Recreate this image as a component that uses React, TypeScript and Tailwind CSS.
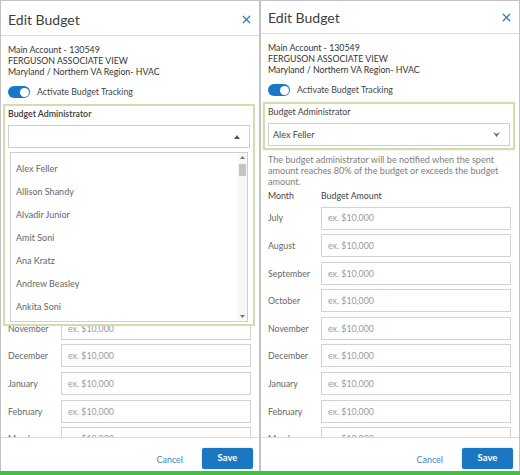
import { X } from "lucide-react";

const months = [
  "July",
  "August",
  "September",
  "October",
  "November",
  "December",
  "January",
  "February",
  "March",
];

const admins = [
  "Alex Feller",
  "Allison Shandy",
  "Alvadir Junior",
  "Amit Soni",
  "Ana Kratz",
  "Andrew Beasley",
  "Ankita Soni",
  "Anthony Ruiz",
];

function Caret({ up }: { up?: boolean }) {
  return up ? (
    <svg width="6" height="4" viewBox="0 0 6 4">
      <path d="M0 4 L3 0 L6 4 Z" fill="#555" />
    </svg>
  ) : (
    <svg width="7" height="5" viewBox="0 0 7 5">
      <path d="M0 0 L3.5 5 L7 0 L3.5 2 Z" fill="#3a6f9e" />
    </svg>
  );
}

function AdminList() {
  return (
    <div className="mt-[2px] flex h-[170px] overflow-hidden border border-[#cfcfcf] bg-white">
      <div className="flex-1 pt-[4px]">
        {admins.map((name) => (
          <div
            key={name}
            className="flex h-[23px] items-center pl-[5px] text-[9px] text-[#666]"
          >
            {name}
          </div>
        ))}
      </div>
      <div className="flex w-[9px] flex-col items-center bg-[#f7f7f7] py-[3px]">
        <svg width="5" height="3" viewBox="0 0 5 3">
          <path d="M0 3 L2.5 0 L5 3 Z" fill="#777" />
        </svg>
        <div className="mt-[5px] h-[12px] w-[7px] bg-[#c4c4c4]" />
        <div className="flex-1" />
        <svg width="5" height="3" viewBox="0 0 5 3">
          <path d="M0 0 L2.5 3 L5 0 Z" fill="#777" />
        </svg>
      </div>
    </div>
  );
}

function Panel({ open }: { open?: boolean }) {
  return (
    <div
      className={
        open
          ? "flex w-[258px] flex-col bg-white pt-[2px]"
          : "flex w-[258px] flex-col bg-white"
      }
    >
      <div className="flex h-[33px] shrink-0 items-center justify-between border-b border-[#dcdcdc] pl-[7px] pr-[6px]">
        <span className="text-[14px] text-[#3d3d3d]">Edit Budget</span>
        <X size={13} strokeWidth={2.4} className="text-[#2b7ec1]" />
      </div>

      <div className="min-h-0 flex-1 overflow-hidden pl-[7px] pr-[8px] pt-[8px]">
        <div className="text-[8.8px] leading-[11px] text-[#333]">
          <div>Main Account - 130549</div>
          <div>FERGUSON ASSOCIATE VIEW</div>
          <div>Maryland / Northern VA Region- HVAC</div>
        </div>

        <div className="mt-[9px] flex h-[12px] items-center gap-[7px]">
          <div className="flex h-[12px] w-[22px] items-center justify-end rounded-full bg-[#1a77c6] pr-[1.5px]">
            <div className="h-[9px] w-[9px] rounded-full bg-white" />
          </div>
          <span className="text-[8.8px] text-[#444]">
            Activate Budget Tracking
          </span>
        </div>

        <div
          className={
            open
              ? "relative z-10 -ml-[5px] -mr-[4px] mt-[6px] border-x-2 border-t-2 border-[#d2dcac] bg-white px-[3px] pb-[2px] pt-[1.5px]"
              : "relative -ml-[5px] -mr-[4px] mt-[6px] border-2 border-[#d2dcac] bg-white px-[3px] pb-[2px] pt-[1.5px] shadow-[0_0_2px_#e3ead0]"
          }
        >
          <div
            className={
              open
                ? "text-[8.8px] font-semibold leading-[11px] text-[#3a3a3a]"
                : "text-[8.8px] leading-[11px] text-[#444]"
            }
          >
            Budget Administrator
          </div>
          <div className="mt-[6.5px] flex h-[23px] items-center justify-between border border-[#cfcfcf] pl-[4px] pr-[9px] text-[9px] text-[#444]">
            <span>{open ? "" : "Alex Feller"}</span>
            <Caret up={open} />
          </div>
          {open && (
            <div className="absolute -left-[2px] -right-[2px] top-full border-x-2 border-b-2 border-[#d2dcac] bg-white px-[5px] pb-[2px]">
              <AdminList />
            </div>
          )}
        </div>

        <p className="mt-[4px] text-[9.1px] leading-[11px] text-[#808080]">
          The budget administrator will be notified when the spent amount
          reaches 80% of the budget or exceeds the budget amount.
        </p>

        <div className="mt-[3px] grid grid-cols-[53px_1fr] text-[8.8px] leading-[11px] text-[#444]">
          <span>Month</span>
          <span>Budget Amount</span>
        </div>

        <div className="mt-[5.5px] flex flex-col gap-[4.6px]">
          {months.map((m) => (
            <div key={m} className="grid grid-cols-[53px_1fr] items-center">
              <span className="text-[8.8px] text-[#666]">{m}</span>
              <div className="flex h-[23px] items-center border border-[#d2d2d2] pl-[6px] text-[8.8px] text-[#9a9a9a]">
                ex. $10,000
              </div>
            </div>
          ))}
        </div>
      </div>

      <div className="flex h-[34px] shrink-0 items-start justify-end gap-[13px] border-t border-[#dcdcdc] pr-[6px] pt-[10px]">
        <span className="mt-[5px] px-[6px] text-[9px] text-[#3f86c4]">
          Cancel
        </span>
        <button className="h-[21px] w-[51px] rounded-[2px] bg-[#1a78c2] text-[9.5px] font-bold text-white shadow-[0_0_2px_#9fd3f0]">
          Save
        </button>
      </div>
    </div>
  );
}

export default function App() {
  return (
    <div className="flex h-[475px] w-[520px] flex-col overflow-hidden bg-[#c2c2c2] pt-px font-['Lato',sans-serif]">
      <div className="flex min-h-0 flex-1 gap-[2px] px-px">
        <Panel open />
        <Panel />
      </div>
      <div className="h-[4px] shrink-0 bg-[#3ec23e]" />
    </div>
  );
}
